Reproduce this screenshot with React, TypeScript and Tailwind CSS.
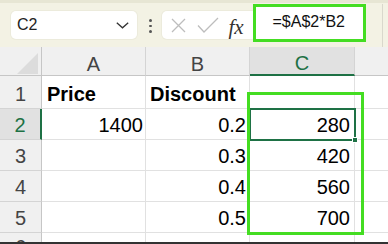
import React from "react";

const G = "#1e7145";

function Cell({
  children,
  className = "",
}: {
  children?: React.ReactNode;
  className?: string;
}) {
  return (
    <div
      className={
        "flex items-end border-r border-b border-[#e1e1e1] pb-[2px] text-[20px] leading-[23px] text-black overflow-hidden " +
        className
      }
    >
      {children}
    </div>
  );
}

function RowHead({ n, active = false }: { n: string; active?: boolean }) {
  return (
    <div
      className={
        "flex items-end justify-center border-b border-[#d4d4d4] pb-[2px] text-[20px] leading-[23px] overflow-hidden " +
        (active
          ? "bg-[#e1e1e1] text-[#1e7145] border-r-2 border-r-[#1e7145]"
          : "bg-[#f0f0f0] text-[#444] border-r border-r-[#c6c6c6]")
      }
    >
      {n}
    </div>
  );
}

function ColHead({ l, active = false }: { l: string; active?: boolean }) {
  return (
    <div
      className={
        "flex items-end justify-center border-r border-[#d4d4d4] text-[20px] leading-[20px] " +
        (active
          ? "bg-[#e1e1e1] text-[#1e7145] border-b-2 border-b-[#1e7145]"
          : "bg-[#f0f0f0] text-[#444] border-b border-b-[#c6c6c6]")
      }
    >
      <span className="pb-[1px]">{l}</span>
    </div>
  );
}

export default function App() {
  const rows: [string, string, string, string][] = [
    ["2", "1400", "0.2", "280"],
    ["3", "", "0.3", "420"],
    ["4", "", "0.4", "560"],
    ["5", "", "0.5", "700"],
  ];
  return (
    <div className="relative w-[388px] h-[244px] overflow-hidden bg-white font-['Liberation_Sans',Arial,sans-serif]">
      {/* formula bar */}
      <div className="h-[47px] bg-[#f3f2e4] border-t-[3px] border-[#e7e6d4] flex items-start">
        <div className="ml-[11px] mt-[8px] w-[126px] h-[28px] bg-white rounded-[5px] flex items-center justify-between pl-[6px] pr-[8px] shadow-[0_0_0_1px_#ecebdc]">
          <span className="text-[16px] text-[#222]">C2</span>
          <svg width="13" height="7" viewBox="0 0 13 7">
            <polyline
              points="0.8,0.8 6.5,5.8 12.2,0.8"
              fill="none"
              stroke="#333"
              strokeWidth="1.3"
            />
          </svg>
        </div>
        <div className="ml-[12px] mt-[16px] flex flex-col gap-[3px]">
          <div className="w-[2.5px] h-[2.5px] bg-[#555] rounded-full" />
          <div className="w-[2.5px] h-[2.5px] bg-[#555] rounded-full" />
          <div className="w-[2.5px] h-[2.5px] bg-[#555] rounded-full" />
        </div>
        <div className="ml-[10px] mt-[8px] w-[95px] h-[28px] bg-white rounded-[5px] flex items-center pl-[9px] shadow-[0_0_0_1px_#ecebdc]">
          <svg width="15" height="15" viewBox="0 0 15 15">
            <path d="M1 1 L14 14 M14 1 L1 14" stroke="#bdbdbd" strokeWidth="1.3" />
          </svg>
          <svg width="22" height="16" viewBox="0 0 22 16" className="ml-[11px]">
            <polyline
              points="1,8.5 7,15 21,1"
              fill="none"
              stroke="#bdbdbd"
              strokeWidth="1.3"
            />
          </svg>
          <span className="ml-[10px] mt-[4px] font-['Liberation_Serif',serif] italic text-[21px] leading-[21px] text-[#333]">
            fx
          </span>
        </div>
        <div className="relative -ml-[4px] mt-[1px] w-[113px] h-[38px] border-[3px] border-[#44dd22] bg-white flex items-center pl-[17px] z-10">
          <span className="text-[16px] text-[#111] pb-[2px]">=$A$2*B2</span>
        </div>
        <div className="ml-[16px] mt-[1px] w-px h-[43px] bg-[#d9d8cc]" />
      </div>

      {/* grid */}
      <div className="grid grid-cols-[42px_104px_104px_105px_33px] grid-rows-[29px_33px_31px_31px_31px_31px_9px]">
        {/* header row */}
        <div className="bg-[#f0f0f0] border-r border-b border-[#c6c6c6] flex items-end justify-end pr-[3px] pb-[1px]">
          <svg width="21" height="21" viewBox="0 0 21 21">
            <polygon points="21,0 21,21 0,21" fill="#dcdcdc" />
          </svg>
        </div>
        <ColHead l="A" />
        <ColHead l="B" />
        <ColHead l="C" active />
        <div className="bg-[#f0f0f0] border-b border-[#c6c6c6]" />

        {/* row 1 */}
        <RowHead n="1" />
        <Cell className="pl-[5px] font-bold">Price</Cell>
        <Cell className="pl-[4px] font-bold">Discount</Cell>
        <Cell />
        <Cell className="border-r-0" />

        {rows.map(([n, a, b, c]) => (
          <React.Fragment key={n}>
            <RowHead n={n} active={n === "2"} />
            <Cell className="justify-end pr-[2px]">{a}</Cell>
            <Cell className="justify-end pr-[3px]">{b}</Cell>
            <Cell className="justify-end pr-[4px]">{c}</Cell>
            <Cell className="border-r-0" />
          </React.Fragment>
        ))}

        {/* row 6 partial */}
        <div className="bg-[#f0f0f0] border-r border-[#c6c6c6] overflow-hidden flex justify-center text-[20px] leading-[23px] text-[#444]">
          <span className="mt-[3px]">6</span>
        </div>
        <div className="border-r border-[#e1e1e1]" />
        <div className="border-r border-[#e1e1e1]" />
        <div className="border-r border-[#e1e1e1]" />
        <div />
      </div>
      <div className="h-[2px] bg-[#333]" />

      {/* selected cell C2 */}
      <div className="absolute left-[249px] top-[108px] w-[107px] h-[33px] border-2 border-[#1e7145]" />
      <div className="absolute left-[352px] top-[137px] w-[6px] h-[6px] bg-[#1e7145] border border-white" />

      {/* annotation rectangle */}
      <div className="absolute left-[247px] top-[92px] w-[117px] h-[143px] border-[3px] border-[#44dd22]" />
    </div>
  );
}
